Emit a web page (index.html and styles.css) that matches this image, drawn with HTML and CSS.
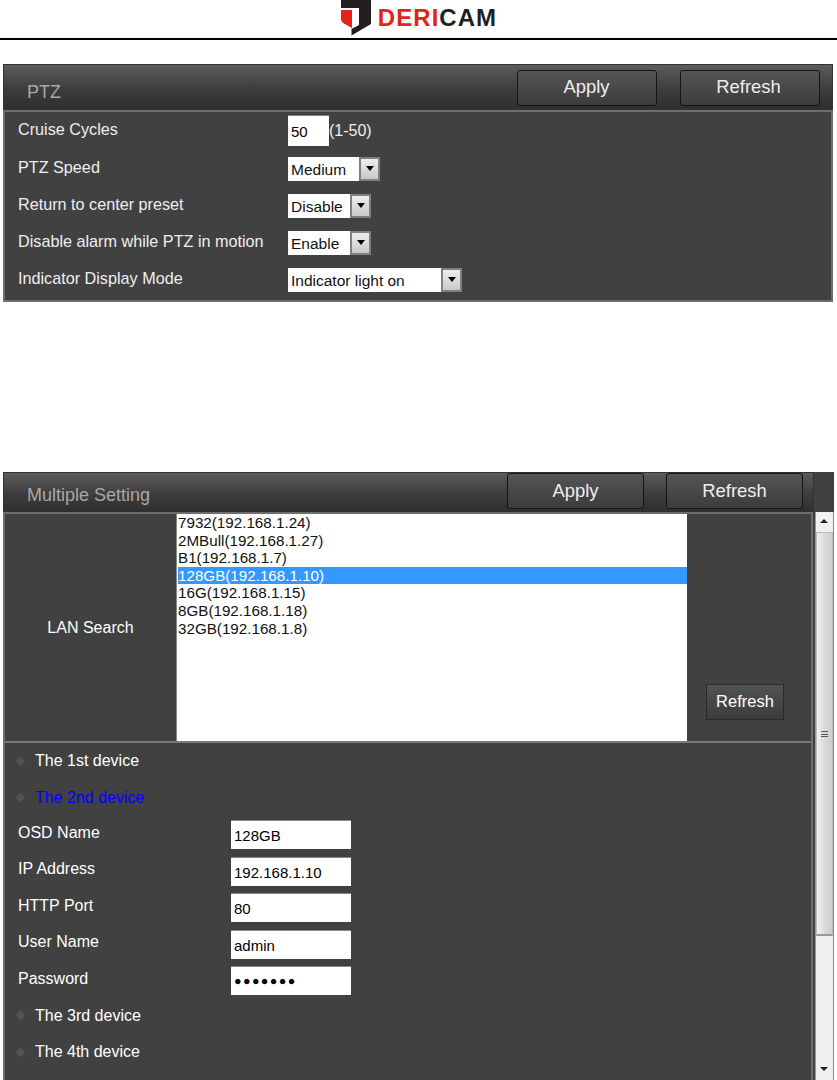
FILE: index.html
```html
<!DOCTYPE html>
<html lang="en">
<head>
<meta charset="utf-8">
<title>DERICAM</title>
<link rel="stylesheet" href="styles.css">
</head>
<body>
<header class="brand">
  <svg class="shield" width="30" height="36" viewBox="0 0 30 36">
    <path d="M0 0H30V24L10.5 35.5V29L18 25V8H0Z" fill="#231f20"/>
    <path d="M0 10H11V28L2 23L0 20Z" fill="#e1251b"/>
  </svg>
  <div class="wordmark"><span class="red">DERI</span>CAM</div>
</header>

<section class="panel ptz">
  <div class="bar">
    <div class="title">PTZ</div>
    <div class="bar-btn apply">Apply</div>
    <div class="bar-btn refresh">Refresh</div>
  </div>
  <div class="ptz-body">
    <div class="row"><div class="label first">Cruise Cycles</div><div class="field small">50</div><div class="hint">(1-50)</div></div>
    <div class="row"><div class="label">PTZ Speed</div><div class="sel w92"><div class="sel-text">Medium</div><div class="arrow"><i></i></div></div></div>
    <div class="row"><div class="label">Return to center preset</div><div class="sel w84"><div class="sel-text">Disable</div><div class="arrow"><i></i></div></div></div>
    <div class="row"><div class="label">Disable alarm while PTZ in motion</div><div class="sel w84"><div class="sel-text">Enable</div><div class="arrow"><i></i></div></div></div>
    <div class="row"><div class="label">Indicator Display Mode</div><div class="sel w174"><div class="sel-text">Indicator light on</div><div class="arrow"><i></i></div></div></div>
  </div>
</section>

<section class="panel multi">
  <div class="bar bar-multi">
    <div class="title">Multiple Setting</div>
    <div class="bar-btn apply">Apply</div>
    <div class="bar-btn refresh">Refresh</div>
  </div>
  <div class="multi-main">
    <div class="multi-body">
      <div class="lan">
        <div class="lan-label">LAN Search</div>
        <div class="listbox">
          <div class="opt">7932(192.168.1.24)</div>
          <div class="opt">2MBull(192.168.1.27)</div>
          <div class="opt">B1(192.168.1.7)</div>
          <div class="opt selected">128GB(192.168.1.10)</div>
          <div class="opt">16G(192.168.1.15)</div>
          <div class="opt">8GB(192.168.1.18)</div>
          <div class="opt">32GB(192.168.1.8)</div>
        </div>
        <div class="lan-side"><div class="small-btn">Refresh</div></div>
      </div>
      <div class="devices">
        <div class="device"><i class="dot"></i>The 1st device</div>
        <div class="device active"><i class="dot"></i>The 2nd device</div>
        <div class="drow"><div class="dlabel">OSD Name</div><div class="field wide">128GB</div></div>
        <div class="drow"><div class="dlabel">IP Address</div><div class="field wide">192.168.1.10</div></div>
        <div class="drow"><div class="dlabel">HTTP Port</div><div class="field wide">80</div></div>
        <div class="drow"><div class="dlabel">User Name</div><div class="field wide">admin</div></div>
        <div class="drow"><div class="dlabel">Password</div><div class="field wide pass">●●●●●●●</div></div>
        <div class="device"><i class="dot"></i>The 3rd device</div>
        <div class="device"><i class="dot"></i>The 4th device</div>
      </div>
    </div>
    <div class="scrollbar">
      <div class="sb-up"></div>
      <div class="sb-thumb"><div class="grip"></div></div>
      <div class="sb-track"></div>
      <div class="sb-down"></div>
    </div>
  </div>
</section>
</body>
</html>
```
FILE: styles.css
```css
* { box-sizing: border-box; }
html, body { margin: 0; padding: 0; }
body {
  width: 837px;
  height: 1080px;
  overflow: hidden;
  background: #fff;
  font-family: "Liberation Sans", Arial, sans-serif;
  font-size: 16px;
}
.brand {
  height: 40px;
  border-bottom: 2px solid #000;
  display: flex;
  justify-content: center;
  align-items: flex-start;
  padding-left: 1px;
  gap: 7px;
}
.shield { display: block; flex: none; }
.wordmark {
  font-size: 24px;
  font-weight: bold;
  line-height: 24px;
  margin-top: 6px;
  color: #231f20;
  letter-spacing: 1.05px;
}
.red { color: #e1251b; }

.panel { margin-left: 3px; background: #414141; }
.ptz { width: 830px; height: 238px; margin-top: 24px; }
.multi { width: 831px; height: 608px; margin-top: 170px; }

.bar {
  height: 46px;
  display: flex;
  background: linear-gradient(#5c5c5c, #3d3d3d 55%, #2f2f2f);
  border: 1px solid #333;
  position: relative;
  padding: 5px 0 0 23px;
}
.title {
  font-size: 18px;
  line-height: 50px;
  margin-top: -3px;
  color: #a8a8a8;
  flex: 1;
  height: 36px;
}
.bar-btn {
  width: 140px;
  height: 36px;
  border: 1px solid #141414;
  border-radius: 3px;
  background: linear-gradient(#555, #3c3c3c);
  color: #eee;
  text-align: center;
  font-size: 18.4px;
  line-height: 32px;
}
.ptz .apply { margin-right: 23px; padding-right: 1px; }
.ptz .refresh { margin-right: 12px; padding-right: 3px; }

.ptz-body {
  height: 192px;
  border: 2px solid #6e6e6e;
}
.row {
  height: 37px;
  display: flex;
  align-items: center;
  padding-left: 13px;
}
.label {
  width: 270px;
  color: #eee;
  font-size: 16.2px;
  flex: none;
}
.first { margin-top: -2px; }
.hint { color: #eee; font-size: 16px; }
.field {
  background: #fff;
  color: #000;
  font-size: 15px;
  border-top: 1px solid #888;
  padding-left: 3px;
}
.small { width: 41px; height: 31px; line-height: 31px; }
.sel {
  display: flex;
  height: 24px;
  margin-top: 2px;
  background: #fff;
  color: #111;
  font-size: 15.5px;
}
.w92 { width: 92px; }
.w84 { width: 83px; }
.w174 { width: 174px; }
.sel-text { flex: 1; padding-left: 3px; line-height: 25px; white-space: nowrap; }
.arrow {
  flex: none;
  width: 21px;
  border: 2px solid #808080;
  background: linear-gradient(#eee, #c8c8c8);
  display: flex;
  align-items: center;
  justify-content: center;
}
.arrow i {
  display: block;
  border-style: solid;
  border-width: 5px 4px 0;
  border-color: #000 transparent transparent;
}

.bar-multi { height: 40px; width: 811px; padding: 0 0 0 23px; border-bottom: none; }
.bar-multi .title { line-height: 44px; margin-top: 0; }
.bar-multi .bar-btn { height: 36px; margin-top: 0; width: 137px; line-height: 33px; }
.bar-multi .apply { margin-right: 22px; }
.bar-multi .refresh { margin-right: 10px; }

.multi-main { display: flex; height: 568px; }
.multi-body {
  width: 811px;
  border-left: 2px solid #6e6e6e;
  border-right: 2px solid #6e6e6e;
  border-top: 2px solid #6e6e6e;
}
.lan {
  display: flex;
  height: 229px;
  border-bottom: 2px solid #7a7a7a;
}
.lan-label {
  width: 171px;
  color: #fff;
  font-size: 16px;
  text-align: center;
  align-self: center;
  flex: none;
}
.listbox {
  width: 511px;
  flex: none;
  background: #fff;
  border-left: 1px solid #888;
  padding-left: 1px;
}
.opt {
  height: 17.6px;
  line-height: 17px;
  font-size: 15.2px;
  color: #111;
}
.selected { background: #3399ff; color: #fff; }
.lan-side { flex: 1; padding: 170px 0 0 19px; }
.small-btn {
  width: 78px;
  height: 36px;
  border: 1px solid #2a2a2a;
  background: linear-gradient(#525252, #3c3c3c);
  color: #fff;
  text-align: center;
  line-height: 33px;
  font-size: 16.5px;
}
.device {
  height: 36.4px;
  display: flex;
  align-items: center;
  color: #fff;
  font-size: 16px;
  padding-left: 12px;
}
.device.active { color: #0000ff; }
.dot {
  display: block;
  width: 7px;
  height: 7px;
  margin-right: 11px;
  background: #525252;
  transform: rotate(45deg);
  flex: none;
}
.drow {
  height: 36.4px;
  display: flex;
  align-items: center;
  padding-left: 13px;
}
.dlabel { width: 213px; color: #fff; font-size: 16px; flex: none; margin-top: -2px; }
.wide { width: 120px; height: 29px; line-height: 29px; padding-left: 3px; margin-top: 2px; }
.pass { font-size: 12.5px; letter-spacing: 1.4px; }

.scrollbar {
  width: 19px;
  margin-left: 2px;
  background: #f0f0f0;
  border-left: 1px solid #9a9a9a;
  border-right: 1px solid #8a8a8a;
  display: flex;
  flex-direction: column;
}
.sb-up { height: 20px; position: relative; }
.sb-up::after {
  content: "";
  position: absolute;
  left: 4px;
  top: 7px;
  border-style: solid;
  border-width: 0 4px 4px;
  border-color: transparent transparent #222;
}
.sb-thumb {
  height: 404px;
  flex: none;
  background: linear-gradient(90deg, #f2f2f2, #d8d8d8 55%, #cfcfcf);
  border: 1px solid #bbb;
  border-bottom: 2px solid #999;
  display: flex;
  align-items: center;
  justify-content: center;
}
.grip {
  width: 7px;
  height: 6px;
  border-top: 1px solid #555;
  border-bottom: 1px solid #555;
  background: linear-gradient(transparent 2px, #555 2px, #555 3px, transparent 3px);
}
.sb-track { flex: 1; }
.sb-down { height: 20px; position: relative; }
.sb-down::after {
  content: "";
  position: absolute;
  left: 4px;
  top: 7px;
  border-style: solid;
  border-width: 4px 4px 0;
  border-color: #222 transparent transparent;
}
```
